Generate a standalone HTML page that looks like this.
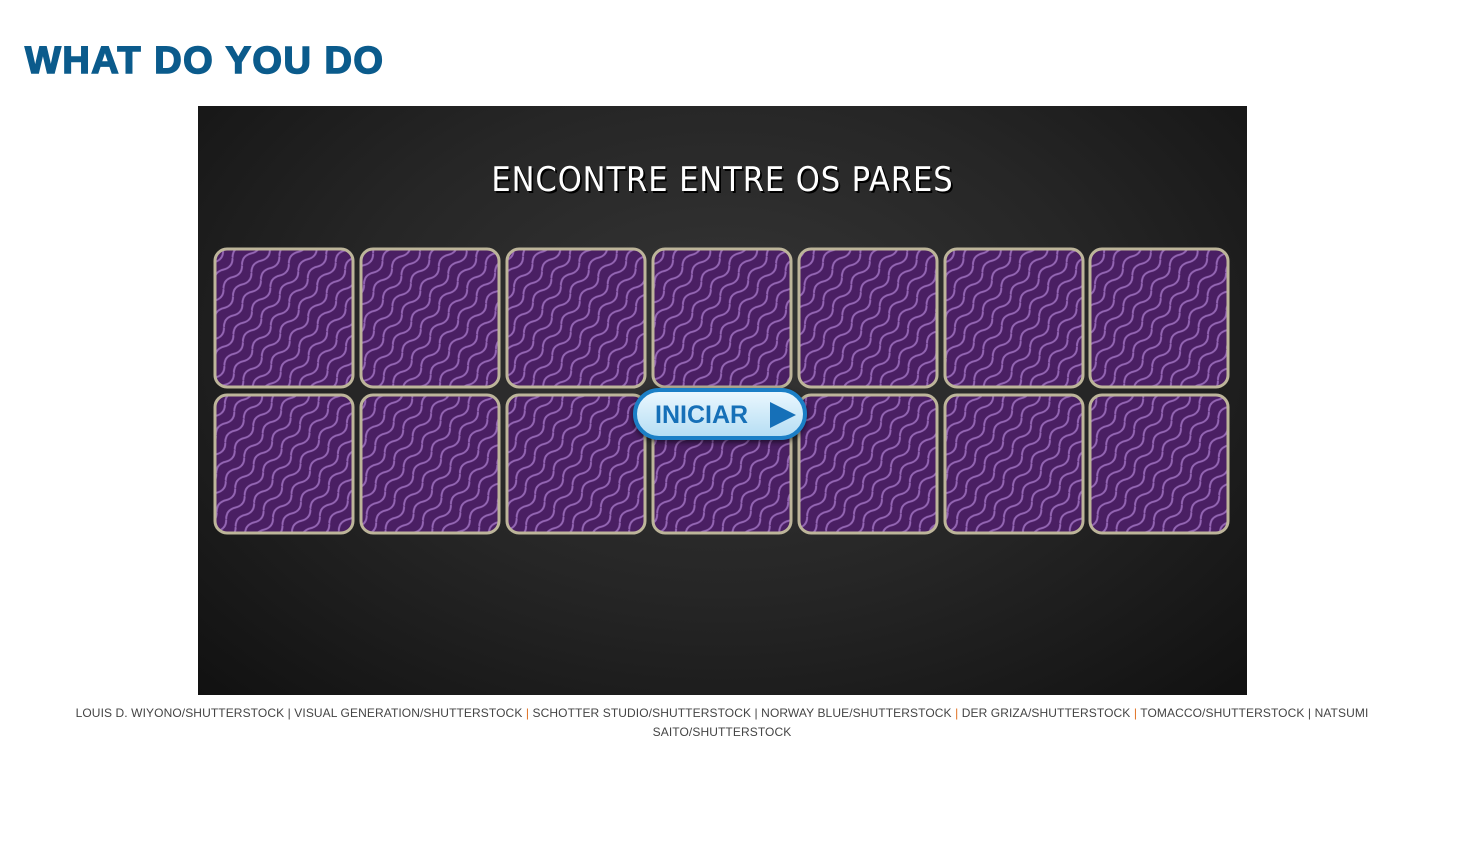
<!DOCTYPE html>
<html><head><meta charset="utf-8"><style>
body{margin:0;background:#fff;width:1460px;height:850px;position:relative;overflow:hidden;font-family:"Liberation Sans",sans-serif}
h1{position:absolute;left:25px;top:40px;margin:0;font-size:38px;font-weight:900;color:#0b5b8c;letter-spacing:1.5px;-webkit-text-stroke:1.5px #0b5b8c}
.board{position:absolute;left:198px;top:106px;width:1049px;height:589px;background:radial-gradient(ellipse at 50% 40%,#363636 0%,#262626 50%,#111 100%)}
.title{position:absolute;left:0;width:100%;top:54px;text-align:center;color:#fff;font-size:34px;font-family:"DejaVu Sans",sans-serif;letter-spacing:1px;text-shadow:2px 2px 0 #000;transform:scaleX(.9)}
.cap{position:absolute;left:32px;width:1380px;top:704px;text-align:center;font-size:12px;line-height:19px;color:#444;letter-spacing:.1px}
.cap b{color:#e07020;font-weight:normal}
.btn{position:absolute;left:633px;top:388px;width:174px;height:52px;border-radius:26px;background:linear-gradient(#eaf7fe,#b6def4);border:4px solid #1b7fc6;box-sizing:border-box;box-shadow:0 2px 6px rgba(0,0,0,.6)}
.btn span{position:absolute;left:18px;top:9px;font-size:25px;font-weight:bold;color:#1670b8}
.btn i{position:absolute;left:133px;top:10px;width:0;height:0;border-left:26px solid #1670b8;border-top:13px solid transparent;border-bottom:13px solid transparent}
</style></head><body>
<h1>WHAT DO YOU DO</h1>
<div class="board"><div class="title">ENCONTRE ENTRE OS PARES</div></div>
<svg style="position:absolute;left:0;top:0" width="1460" height="850">
<defs><pattern id="w" width="30" height="12" patternUnits="userSpaceOnUse" patternTransform="rotate(-52)">
<rect width="30" height="12" fill="#4a1f63"/>
<path d="M0 6 Q7.5 0 15 6 T30 6" fill="none" stroke="#9466b4" stroke-width="2"/></pattern></defs>
<g stroke="#bdb59a" stroke-width="3" fill="url(#w)">
<rect x="215" y="249" width="138" height="138" rx="12"/><rect x="361" y="249" width="138" height="138" rx="12"/><rect x="507" y="249" width="138" height="138" rx="12"/><rect x="653" y="249" width="138" height="138" rx="12"/><rect x="799" y="249" width="138" height="138" rx="12"/><rect x="945" y="249" width="138" height="138" rx="12"/><rect x="1090" y="249" width="138" height="138" rx="12"/>
<rect x="215" y="395" width="138" height="138" rx="12"/><rect x="361" y="395" width="138" height="138" rx="12"/><rect x="507" y="395" width="138" height="138" rx="12"/><rect x="653" y="395" width="138" height="138" rx="12"/><rect x="799" y="395" width="138" height="138" rx="12"/><rect x="945" y="395" width="138" height="138" rx="12"/><rect x="1090" y="395" width="138" height="138" rx="12"/>
</g></svg>
<div class="btn"><span>INICIAR</span><i></i></div>
<div class="cap">LOUIS D. WIYONO/SHUTTERSTOCK | VISUAL GENERATION/SHUTTERSTOCK <b>|</b> SCHOTTER STUDIO/SHUTTERSTOCK | NORWAY BLUE/SHUTTERSTOCK <b>|</b> DER GRIZA/SHUTTERSTOCK <b>|</b> TOMACCO/SHUTTERSTOCK | NATSUMI<br>SAITO/SHUTTERSTOCK</div>
</body></html>
